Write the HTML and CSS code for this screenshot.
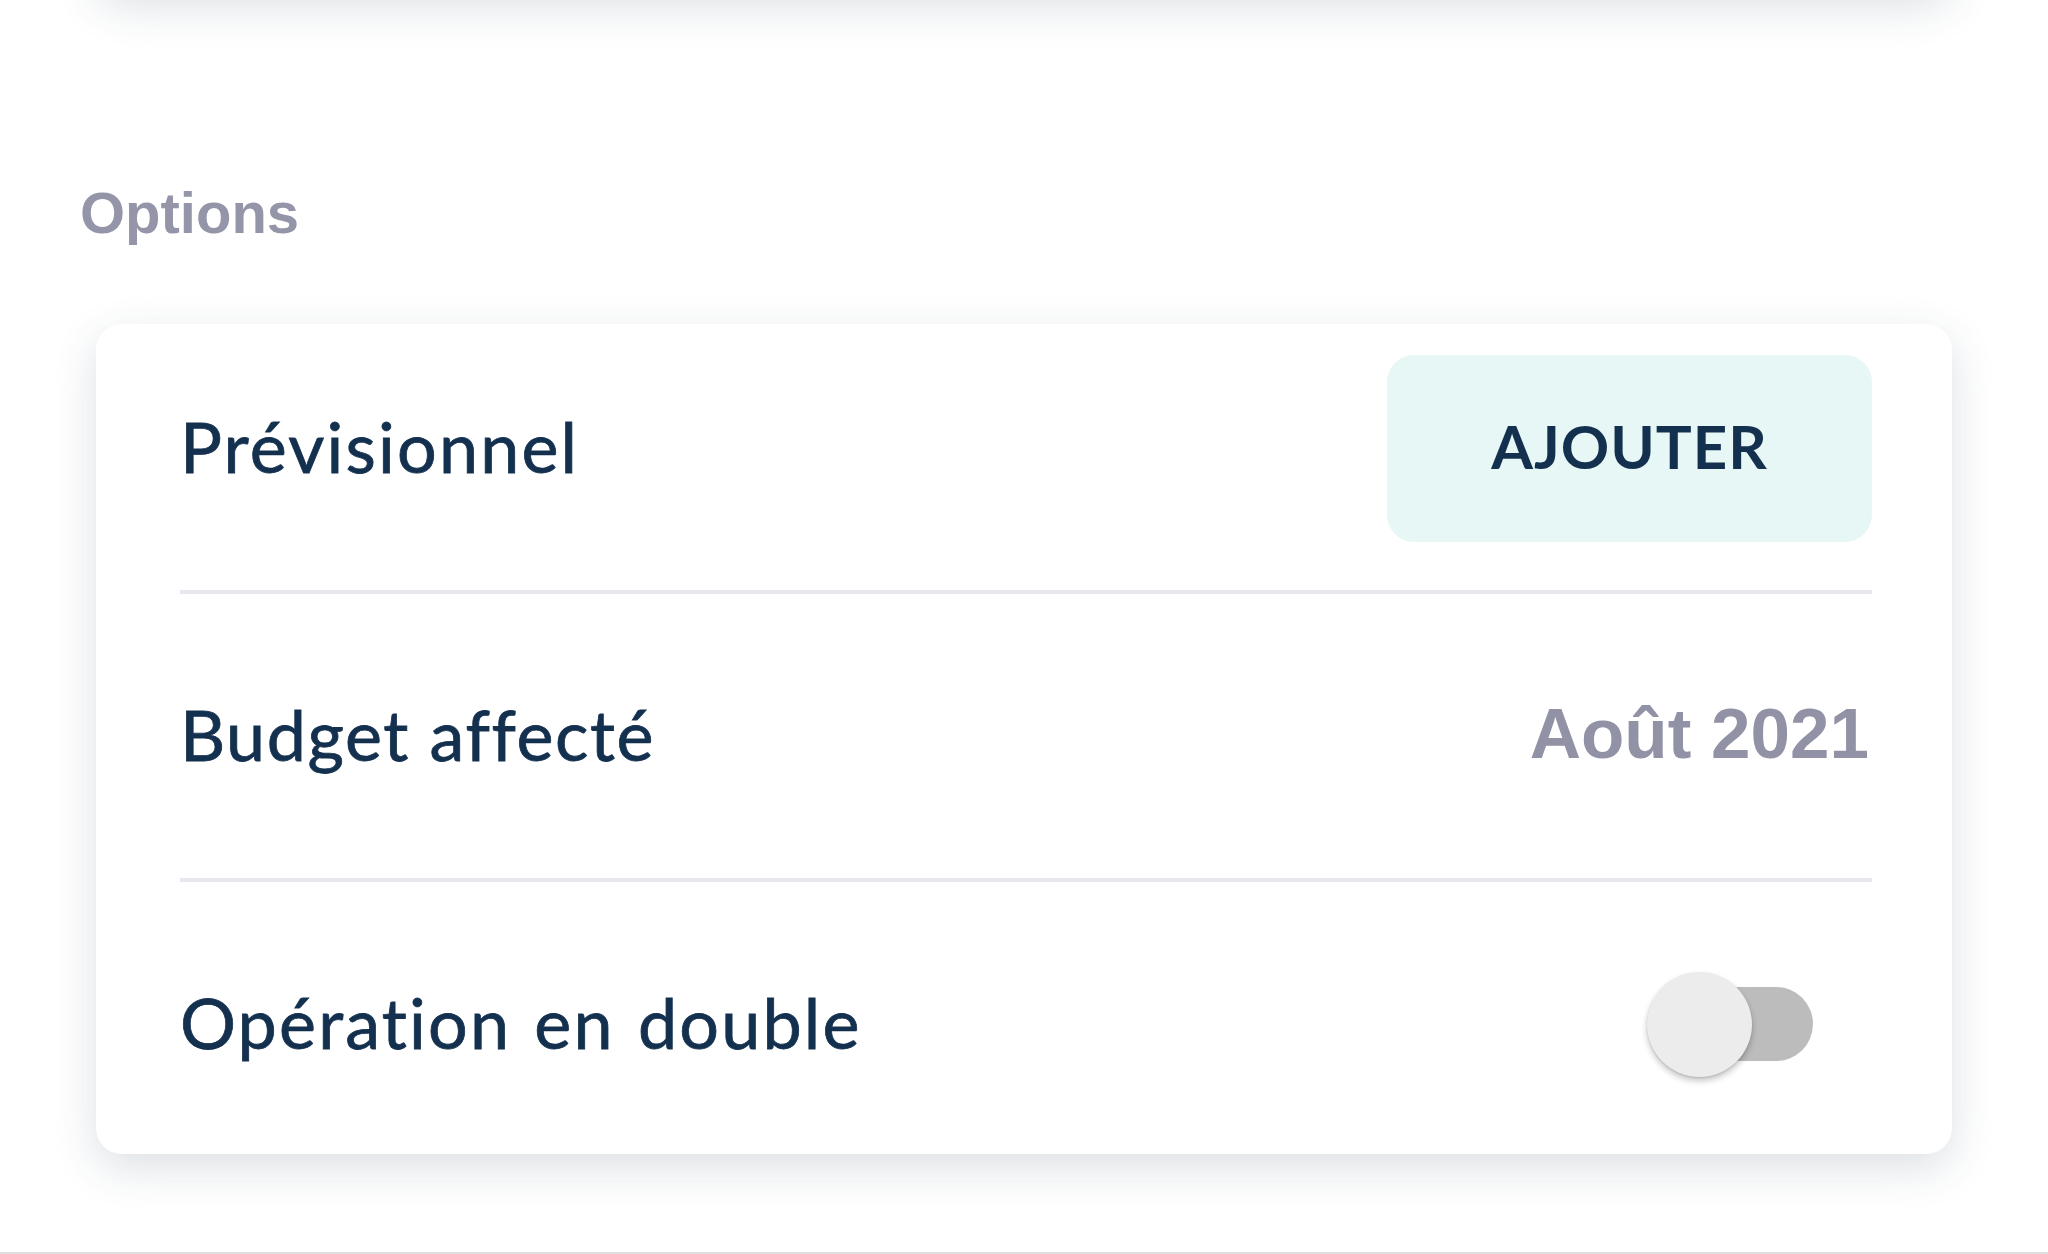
FILE: index.html
```html
<!DOCTYPE html>
<html lang="fr">
<head>
<meta charset="utf-8">
<title>Options</title>
<link rel="stylesheet" href="styles.css">
</head>
<body>
<div class="page">
  <div class="prev-card"></div>
  <h2 class="section-title">Options</h2>
  <div class="card">
    <div class="row row-first">
      <span class="label">Prévisionnel</span>
      <button class="btn-add">AJOUTER</button>
    </div>
    <div class="divider"></div>
    <div class="row row-mid">
      <span class="label label-tight">Budget affecté</span>
      <span class="value">Août 2021</span>
    </div>
    <div class="divider"></div>
    <div class="row row-last">
      <span class="label">Opération en double</span>
      <span class="switch">
        <span class="switch-track"></span>
        <span class="switch-thumb"></span>
      </span>
    </div>
  </div>
</div>
<div class="bottom-edge"></div>
</body>
</html>
```

FILE: styles.css
```css
* { box-sizing: border-box; }

html, body {
  margin: 0;
  padding: 0;
}

body {
  width: 2048px;
  height: 1254px;
  overflow: hidden;
  background: #ffffff;
  display: flex;
  flex-direction: column;
  font-family: "Lato", "Liberation Sans", sans-serif;
}

.page {
  padding: 0 96px;
  flex: 1;
}

.prev-card {
  height: 120px;
  margin-top: -128px;
  border-radius: 26px;
  background: #ffffff;
  box-shadow: 0 14px 44px rgba(40, 60, 90, 0.16);
}

.section-title {
  margin: 192px 0 0 -16px;
  height: 58px;
  font-family: "Liberation Sans", Arial, sans-serif;
  font-weight: 700;
  font-size: 58px;
  line-height: 58px;
  color: #9495a9;
}

.card {
  margin-top: 82px;
  background: #ffffff;
  border-radius: 26px;
  padding: 0 80px 0 84px;
  box-shadow: 0 14px 44px rgba(40, 60, 90, 0.16);
}

.row {
  display: flex;
  align-items: center;
  justify-content: space-between;
}

.row-first {
  padding: 31px 0 48px;
}

.row-mid {
  height: 284px;
}

.row-last {
  height: 272px;
  padding-top: 12px;
}

.divider {
  height: 4px;
  background: #e7e8ed;
}

.label {
  font-family: "Lato", sans-serif;
  font-weight: 400;
  font-size: 70px;
  line-height: 84px;
  padding-bottom: 5px;
  color: #14304f;
  -webkit-text-stroke: 0.8px #14304f;
  letter-spacing: 2.2px;
  word-spacing: 3px;
}

.label-tight {
  letter-spacing: 1.6px;
  word-spacing: 0;
}

.btn-add {
  width: 485px;
  height: 187px;
  border: none;
  border-radius: 27px;
  background: #e7f7f6;
  color: #13304f;
  font-family: "Lato", sans-serif;
  font-weight: 700;
  font-size: 60px;
  letter-spacing: 1px;
  padding: 0 0 6px;
  cursor: pointer;
}

.value {
  font-family: "Liberation Sans", Arial, sans-serif;
  font-weight: 700;
  font-size: 71px;
  line-height: 84px;
  padding-bottom: 4px;
  color: #9292a7;
  margin-right: 3px;
}

.switch {
  position: relative;
  width: 166px;
  height: 105px;
  margin-right: 59px;
}

.switch-track {
  position: absolute;
  left: 16px;
  top: 15px;
  width: 150px;
  height: 74px;
  border-radius: 37px;
  background: #bcbcbc;
}

.switch-thumb {
  position: absolute;
  left: 0;
  top: 0;
  width: 105px;
  height: 105px;
  border-radius: 50%;
  background: #ececec;
  box-shadow: 0 4px 6px rgba(0, 0, 0, 0.22), 0 1px 2px rgba(0, 0, 0, 0.12);
}

.bottom-edge {
  height: 2px;
  background: #dedede;
}
```
